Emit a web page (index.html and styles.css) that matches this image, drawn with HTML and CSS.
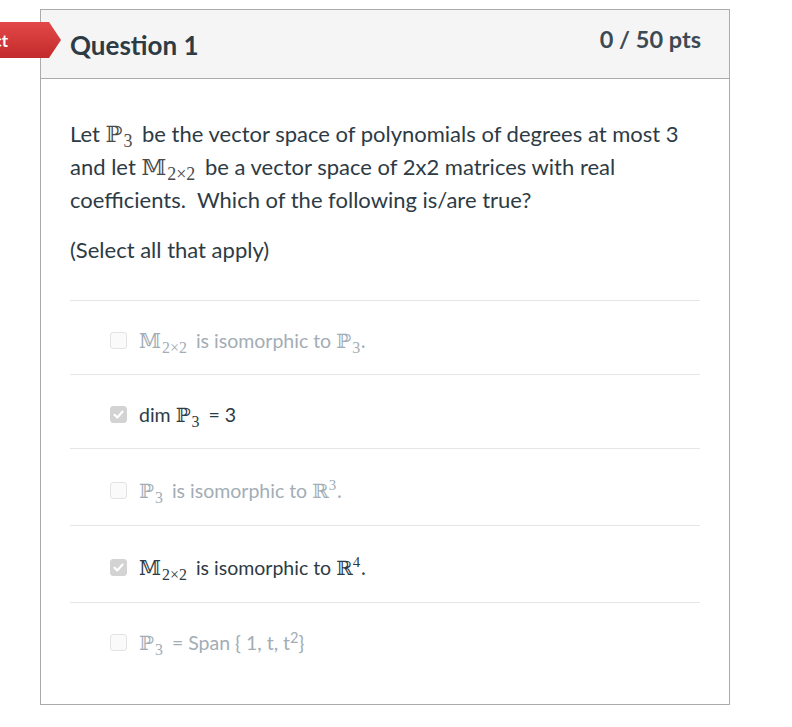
FILE: index.html
```html
<!DOCTYPE html>
<html>
  <head>
    <title>Quiz ~ Question 1</title>
    <link rel="stylesheet" href="styles.css">
  </head>
<body>
<div class = 'page'>
  <div class = 'result_tab'><span>Incorrect</span></div>
  <div class = 'question'>
    <div class = 'question_header'>
      <h2 class = 'question_name'>Question 1</h2>
      <span class = 'question_points'>0 / 50 pts</span>
    </div>
    <div class = 'question_body'>
      <div class = 'question_text'>
        <p>Let <span class = 'm'>ℙ<sub>3</sub></span> be the vector space of polynomials of degrees at most 3 and let <span class = 'm'>𝕄<sub>2×2</sub></span> be a vector space of 2x2 matrices with real coefficients.&nbsp; Which of the following is/are true?</p>
        <p class = 'hint'>(Select all that apply)</p>
      </div>
      <div class = 'answers'>
        <div class = 'answer'>
          <span class = 'box'></span>
          <span class = 'answer_text'><span class = 'm'>𝕄<sub>2×2</sub></span> is isomorphic to <span class = 'm'>ℙ<sub>3</sub>.</span></span>
        </div>
        <div class = 'answer selected'>
          <span class = 'box'><svg width = '13' height = '13' viewBox = '0 0 13 13'><path d = 'M2.5 6.8 L5.3 9.5 L10.6 3.6' fill = 'none' stroke = '#fff' stroke-width = '2.2' stroke-linecap = 'round' stroke-linejoin = 'round'/></svg></span>
          <span class = 'answer_text'>dim <span class = 'm'>ℙ<sub>3</sub></span> = 3</span>
        </div>
        <div class = 'answer tall'>
          <span class = 'box'></span>
          <span class = 'answer_text'><span class = 'm'>ℙ<sub>3</sub></span> is isomorphic to <span class = 'm'>ℝ<sup>3</sup>.</span></span>
        </div>
        <div class = 'answer selected tall'>
          <span class = 'box'><svg width = '13' height = '13' viewBox = '0 0 13 13'><path d = 'M2.5 6.8 L5.3 9.5 L10.6 3.6' fill = 'none' stroke = '#fff' stroke-width = '2.2' stroke-linecap = 'round' stroke-linejoin = 'round'/></svg></span>
          <span class = 'answer_text'><span class = 'm'>𝕄<sub>2×2</sub></span> is isomorphic to <span class = 'm'>ℝ<sup>4</sup>.</span></span>
        </div>
        <div class = 'answer'>
          <span class = 'box'></span>
          <span class = 'answer_text'><span class = 'm'>ℙ<sub>3</sub></span> = Span { 1, t, t<sup>2</sup>}</span>
        </div>
      </div>
    </div>
  </div>
</div>
</body>
</html>
```

FILE: styles.css
```css
:root {
  --textColor: #2d3b45;
  --fadedColor: #a3adb5;
  --lineColor: #e6e6e6;
}

body {
  margin: 0;
  font-family: Lato, "Liberation Sans", sans-serif;
  color: var(--textColor);
  background: #fff;
}

.page {
  position: relative;
  padding: 9px 0 0 40px;
}

.result_tab {
  position: absolute;
  left: 0;
  top: 22px;
  width: 61px;
  height: 36px;
  display: flex;
  justify-content: flex-end;
  align-items: center;
  box-sizing: border-box;
  padding-right: 53px;
  background: linear-gradient(#e34848, #c22b2b);
  clip-path: polygon(0 0, 49px 0, 61px 50%, 49px 100%, 0 100%);
  color: #fff;
  font-weight: 700;
  font-size: 17px;
  white-space: nowrap;
  z-index: 2;
}

.question {
  width: 688px;
  height: 694px;
  border: 1px solid #ababab;
}

.question_header {
  height: 68px;
  background: #f5f5f5;
  border-bottom: 1px solid #ababab;
  display: flex;
  justify-content: space-between;
  align-items: flex-start;
  padding: 0 28px 0 29px;
}

.question_name {
  margin: 0;
  padding-top: 20px;
  font-size: 26px;
  font-weight: 700;
  line-height: 30px;
}

.question_points {
  padding-top: 15px;
  font-size: 23.5px;
  font-weight: 700;
  line-height: 28px;
  color: #3d4a54;
}

.question_body {
  padding: 0 29px;
}

.question_text {
  padding-top: 38px;
  padding-bottom: 34px;
  font-size: 22px;
  line-height: 33px;
  border-bottom: 1px solid var(--lineColor);
}

.question_text p {
  margin: 0;
}

.question_text .hint {
  margin-top: 17px;
}

.m {
  font-family: "DejaVu Serif", "Liberation Serif", serif;
  font-size: 1.02em;
  line-height: 0;
  color: #4a4a4a;
  margin-right: 4px;
}

.answers .m {
  color: inherit;
}

.m sub, .m sup {
  font-family: "Liberation Serif", serif;
  font-size: 0.8em;
  line-height: 0;
}

.m sub {
  vertical-align: -5px;
  margin-left: 1px;
}

.answer {
  box-sizing: border-box;
  height: 74px;
  display: flex;
  align-items: center;
  padding: 5px 0 0 40px;
  border-bottom: 1px solid var(--lineColor);
  font-size: 19.5px;
  color: var(--fadedColor);
}

.answer.tall {
  height: 77px;
  padding-top: 7px;
}

.answer:last-child {
  border-bottom: none;
}

.answer.selected {
  color: var(--textColor);
}

.box {
  width: 17px;
  height: 17px;
  box-sizing: border-box;
  border: 1px solid #e3e3e3;
  border-radius: 3px;
  background: #fafafa;
  margin-right: 12px;
  display: flex;
  align-items: center;
  justify-content: center;
}

.selected .box {
  background: #d3d3d3;
  border-color: #d3d3d3;
}

.answer_text sup {
  font-size: 0.75em;
  line-height: 0;
}
```
